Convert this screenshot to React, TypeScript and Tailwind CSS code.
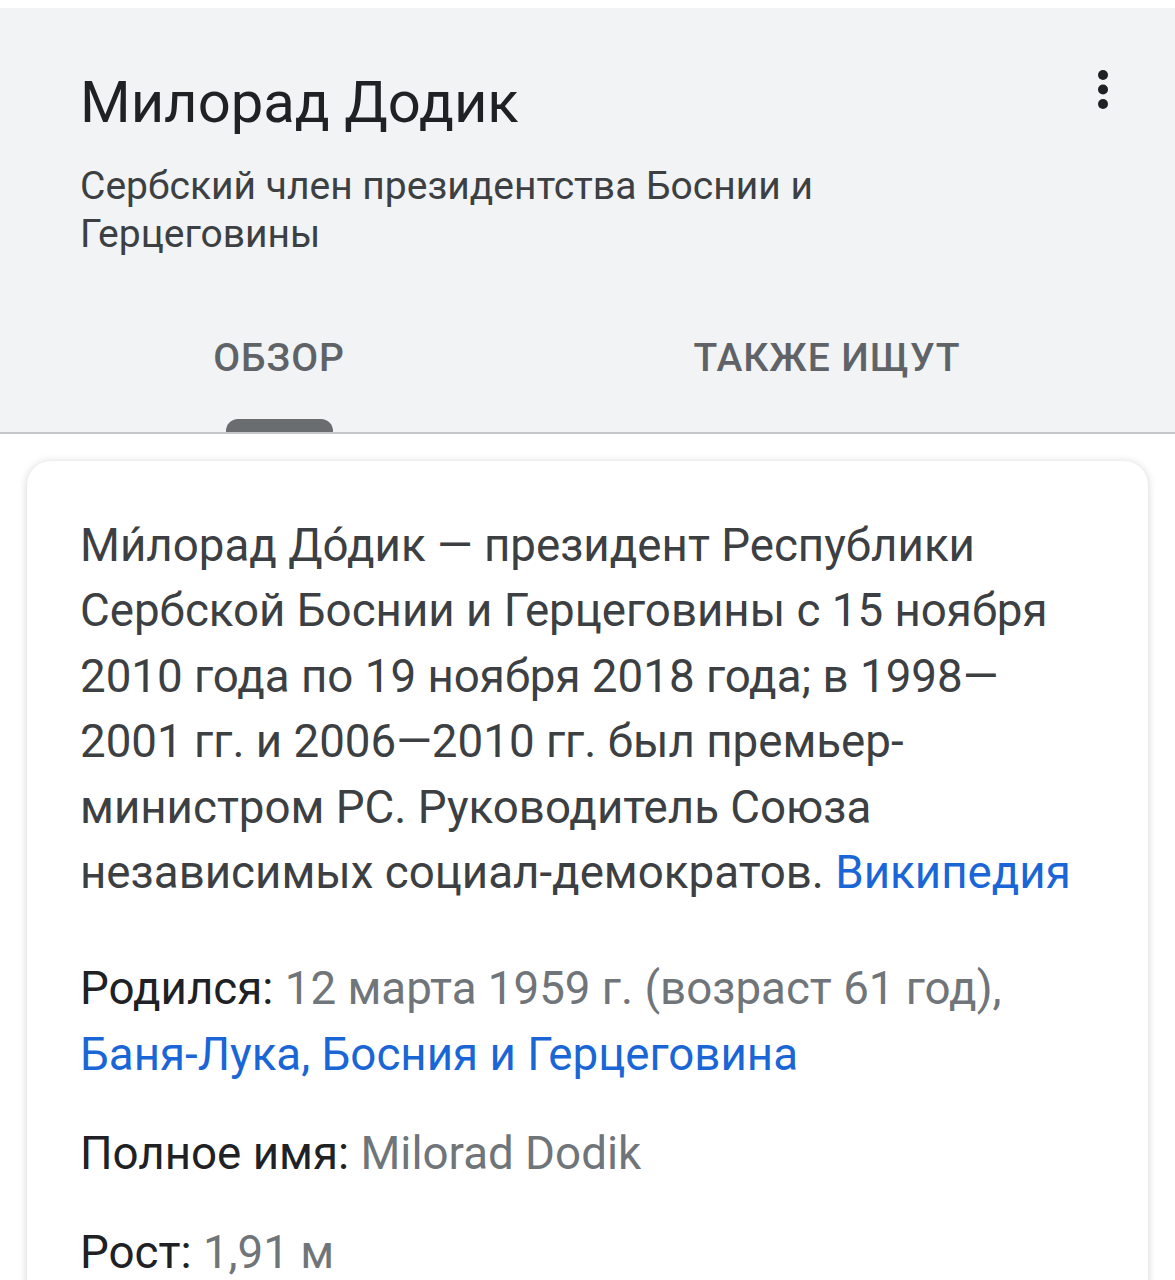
export default function App() {
  return (
    <div className="min-h-screen bg-white font-['Roboto',sans-serif] overflow-hidden h-[1280px]">
      <div className="h-[8px] bg-white" />
      <div className="bg-[#f1f3f4] border-b-2 border-[#c4c7ca]">
        <div className="flex items-start justify-between pl-[80px] pr-[62px] pt-[60px]">
          <h1 className="text-[58px] leading-[68px] text-[#202124]">Милорад Додик</h1>
          <svg width="20" height="44" viewBox="0 0 20 44">
            <circle cx="10" cy="7" r="5" fill="#202124" />
            <circle cx="10" cy="21.5" r="5" fill="#202124" />
            <circle cx="10" cy="36" r="5" fill="#202124" />
          </svg>
        </div>
        <p className="pl-[80px] pr-[300px] mt-[26px] text-[39px] leading-[48px] text-[#3c4043]">
          Сербский член президентства Боснии и Герцеговины
        </p>
        <div className="flex pl-[5px] mt-[80px]">
          <div className="w-[548px] flex flex-col items-center">
            <span className="text-[39px] leading-[40px] font-medium text-[#5f6368] tracking-wide">ОБЗОР</span>
            <div className="mt-[41px] w-[107px] h-[13px] bg-[#696d70] rounded-t-[12px]" />
          </div>
          <div className="w-[548px] flex flex-col items-center">
            <span className="text-[39px] leading-[40px] font-medium text-[#5f6368] tracking-wide">ТАКЖЕ ИЩУТ</span>
          </div>
        </div>
      </div>
      <div className="px-[27px] pt-[27px]">
        <div className="bg-white rounded-[24px] shadow-[0_1px_8px_rgba(0,0,0,0.18)] px-[53px] pt-[52px] pb-[40px]">
          <p className="text-[45.7px] leading-[65.4px] text-[#3c4043]">
            Ми́лорад До́дик — президент Республики Сербской Боснии и Герцеговины с 15 ноября 2010 года по 19 ноября 2018 года; в 1998—2001 гг. и 2006—2010 гг. был премьер-министром РС. Руководитель Союза независимых социал-демократов.{" "}
            <span className="text-[#1a66d6]">Википедия</span>
          </p>
          <p className="mt-[51px] text-[45.7px] leading-[65.4px] text-[#202124]">
            Родился: <span className="text-[#70757a]">12 марта 1959 г. (возраст 61 год),</span>{" "}
            <span className="text-[#1a66d6]">Баня-Лука, Босния и Герцеговина</span>
          </p>
          <p className="mt-[34px] text-[45.7px] leading-[65.4px] text-[#202124]">
            Полное имя: <span className="text-[#70757a]">Milorad Dodik</span>
          </p>
          <p className="mt-[33px] text-[45.7px] leading-[65.4px] text-[#202124]">
            Рост: <span className="text-[#70757a]">1,91 м</span>
          </p>
        </div>
      </div>
    </div>
  );
}
